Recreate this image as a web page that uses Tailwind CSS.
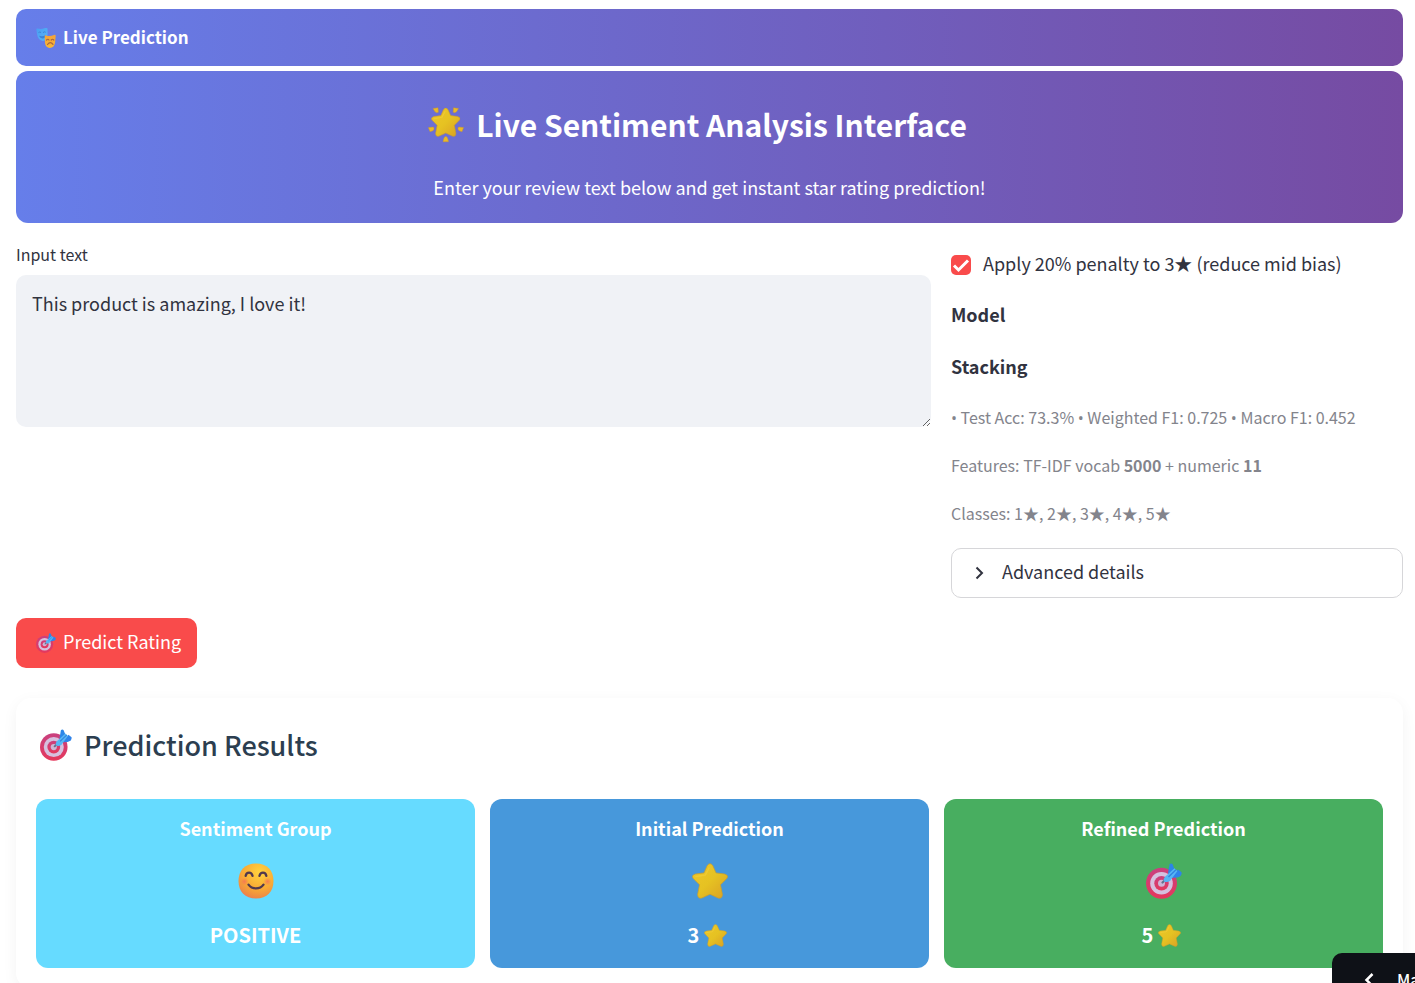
<!DOCTYPE html>
<html lang="en">
<head>
<meta charset="utf-8">
<meta name="viewport" content="width=device-width, initial-scale=1">
<title>Live Prediction</title>
<script src="https://cdn.jsdelivr.net/npm/@tailwindcss/browser@4"></script>
</head>
<body class="min-h-screen bg-white font-['Noto_Sans_CJK_SC','Noto_Sans',sans-serif] text-lg text-[#31333f]">

<!-- Icon sprites -->
<svg class="absolute size-0" aria-hidden="true">
  <defs>
    <linearGradient id="gold" x1="0" y1="0" x2="1" y2="1"><stop offset="0" stop-color="#edc62a"/><stop offset=".5" stop-color="#e6c222"/><stop offset="1" stop-color="#d99f25"/></linearGradient>
    <linearGradient id="ring" x1="0" y1="0" x2="0" y2="1"><stop offset="0" stop-color="#c9407f"/><stop offset="1" stop-color="#e5385c"/></linearGradient>
    <radialGradient id="skin" cx=".6" cy=".25" r=".85"><stop offset="0" stop-color="#ffd33f"/><stop offset=".55" stop-color="#f9ab35"/><stop offset=".85" stop-color="#ee8a44"/><stop offset="1" stop-color="#e2707a"/></radialGradient>
    <radialGradient id="blush"><stop offset="0" stop-color="#f5705a" stop-opacity=".8"/><stop offset="1" stop-color="#f5705a" stop-opacity="0"/></radialGradient>
    <linearGradient id="blue" x1="0" y1="0" x2="1" y2="1"><stop offset="0" stop-color="#4a9df2"/><stop offset="1" stop-color="#58b5f7"/></linearGradient>
    <linearGradient id="orange" x1="0" y1="0" x2="0" y2="1"><stop offset="0" stop-color="#f2a23c"/><stop offset="1" stop-color="#fbb932"/></linearGradient>
    <symbol id="star" viewBox="0 0 36 36">
      <path d="M15.300 2.400 Q18 -1 20.700 2.400 L24 9.900 L32.500 11 Q37 12.300 34.800 15.400 L28.500 21.800 L30.400 31.600 Q30 36.300 26 34.900 L18 31.200 L10 34.900 Q6 36.300 5.600 31.600 L7.500 21.800 L1.200 15.400 Q-1 12.300 3.500 11 L12 9.900 Z" fill="url(#gold)" stroke="#cd9d26" stroke-width=".7"/>
      <path d="M17 5 L13.500 11.900 L4 13.600" fill="none" stroke="#f7d544" stroke-width="1.500" stroke-linecap="round" stroke-linejoin="round" opacity=".4"/>
    </symbol>
    <symbol id="glow-star" viewBox="0 0 36 36">
      <svg x="3" y=".5" width="29.500" height="29.500" viewBox="0 0 36 36"><use href="#star"/></svg>
      <g fill="#e9b928" stroke="#c9962c" stroke-width=".4" stroke-linejoin="round">
        <path d="M5 1.500 L10 .7 L10.400 5.300 Q8.200 6.500 6.800 4.600 Z"/>
        <path d="M25.500 .7 L30.500 1.500 L28.700 4.600 Q27.300 6.500 25.100 5.300 Z"/>
        <path d="M.4 20.500 L5.500 20 Q7 22 5 23.700 L2 24.700 Z"/>
        <path d="M35.600 20.500 L30.500 20 Q29 22 31 23.700 L34 24.700 Z"/>
        <path d="M17.800 29.500 Q19.800 29.500 20.500 34.800 L15 34.800 Q15.800 29.500 17.800 29.500 Z"/>
      </g>
    </symbol>
    <symbol id="target" viewBox="0 0 36 36">
      <circle cx="15.500" cy="20.300" r="15.500" fill="url(#ring)"/>
      <circle cx="15.500" cy="20.300" r="11.300" fill="#d6c0df"/>
      <circle cx="15.500" cy="20.300" r="7.200" fill="url(#ring)"/>
      <circle cx="15.500" cy="20.300" r="3.500" fill="#cdb5d5"/>
      <path d="M16.500 19.500 L22 14" stroke="#63718d" stroke-width="2.200" stroke-linecap="round"/>
      <path d="M22 10 L23.500 1.500 Q25 -.5 26.600 1.300 L28.400 6 L24.500 14 Z" fill="#2c86e8"/>
      <path d="M25.500 13.700 L32 6.400 L35.500 9.200 Q36.300 13.200 31 14.600 L25 15 Z" fill="#2f83ea"/>
      <path d="M19 13.700 L28.500 5.200 L31.400 8 L24 18 Q19.800 20.200 17.700 17.900 Q17.200 15.800 19 13.700 Z" fill="#56b6f5"/>
      <path d="M22.500 14 L30.200 6.500" stroke="#3182df" stroke-width="1.200"/>
    </symbol>
    <symbol id="smile" viewBox="0 0 36 36">
      <path d="M18 .5 C29 .5 35.500 7.500 35.500 18 C35.500 28.500 29 35.500 18 35.500 C7 35.500 .5 28.500 .5 18 C.5 7.500 7 .5 18 .5 Z" fill="url(#skin)"/>
      <circle cx="6.500" cy="18.500" r="4" fill="url(#blush)"/><circle cx="29.500" cy="18.500" r="4" fill="url(#blush)"/>
      <path d="M7.700 12.800 C8.500 8.500 13.500 8.500 14.500 12.800 M21.500 12.800 C22.500 8.500 27.500 8.500 28.300 12.800 M10.500 21.700 C14 26.700 22 26.700 25.500 21.700" fill="none" stroke="#51394e" stroke-width="2.300" stroke-linecap="round"/>
    </symbol>
    <symbol id="masks" viewBox="0 0 20 20">
      <path d="M.3 1 Q.3 .1 1.500 .5 Q5 1.600 8.800 .1 Q11.500 -.6 11.500 1 L11.600 6 Q11.500 12.500 6.800 13 Q1.900 12 1 6 Z" fill="url(#blue)"/>
      <path d="M2.500 4.600 Q4 3.300 5 4.600 M7 4.600 Q8.500 3.200 9.700 4.300" fill="none" stroke="#3c80d4" stroke-width=".9"/>
      <path d="M3 7.800 Q6.400 8.700 9.600 7.300 Q9.300 10.500 6.500 10.500 Q4 10.400 3 7.800" fill="#3c80d4"/>
      <path d="M8.700 8.300 Q8.700 7 10 7.400 Q14 8.600 17.900 7 Q19.800 6.400 19.700 8 L19 15 Q18 19.800 13.800 20 Q9.500 19.300 9 15 Z" fill="url(#orange)"/>
      <path d="M10.500 12 Q12 10.500 13 12 M15.200 12 Q16.500 10.500 17.800 12 M11.500 16.500 Q14.300 12.700 17 16.300" fill="none" stroke="#ab6742" stroke-width="1.200" stroke-linecap="round"/>
    </symbol>
  </defs>
</svg>

<main class="pt-[9px] pr-3 pb-4 pl-4">
  <header class="flex h-[57px] items-center gap-[7px] rounded-[10px] bg-[linear-gradient(90deg,#667eea,#764ba2)] px-5 text-white">
    <svg class="size-5" aria-hidden="true"><use href="#masks"/></svg>
    <h2 class="text-[17px] font-semibold">Live Prediction</h2>
  </header>

  <section class="mt-[5px] flex h-[152px] flex-col items-center rounded-xl bg-[linear-gradient(90deg,#667eea,#764ba2)] pt-[30px] text-white">
    <h1 class="flex items-center gap-3 pr-6 text-[30px] leading-[46px] font-semibold"><svg class="mt-0.5 size-9" aria-hidden="true"><use href="#glow-star"/></svg>Live Sentiment Analysis Interface</h1>
    <p class="mt-[26px] leading-7">Enter your review text below and get instant star rating prediction!</p>
  </section>

  <form class="mt-5">
    <div class="grid grid-cols-[915fr_452fr] gap-5">
      <div>
        <label for="review" class="block h-8 text-base leading-[22px]">Input text</label>
        <textarea id="review" class="block h-[152px] w-full resize-y rounded-[10px] bg-[#f0f2f6] px-4 pt-3.5 leading-7 outline-none">This product is amazing, I love it!</textarea>
      </div>
      <div>
        <label class="mt-2 flex h-7 items-center gap-3">
          <span class="relative size-5">
            <input type="checkbox" checked class="block size-5 appearance-none rounded-[5px] bg-[#f94b4b]">
            <svg class="pointer-events-none absolute inset-0 size-5" viewBox="0 0 20 20" fill="none" stroke="#fff" stroke-width="3" aria-hidden="true"><path d="M3 10.500 L7.500 15 L17 5.500"/></svg>
          </span>
          <span class="pb-1">Apply 20% penalty to 3★ (reduce mid bias)</span>
        </label>
        <p class="mt-[21px] leading-7 font-semibold">Model</p>
        <p class="mt-6 leading-7 font-semibold">Stacking</p>
        <div class="mt-[25px] flex flex-col gap-6 text-base leading-6 text-[#83848c]">
          <p><span class="font-['Open_Sans'] leading-none">•</span> Test Acc: 73.3% <span class="font-['Open_Sans'] leading-none">•</span> Weighted F1: 0.725 <span class="font-['Open_Sans'] leading-none">•</span> Macro F1: 0.452</p>
          <p>Features: TF-IDF vocab <strong class="font-semibold">5000</strong> + numeric <strong class="font-semibold">11</strong></p>
          <p>Classes: 1★, 2★, 3★, 4★, 5★</p>
        </div>
        <details class="mt-[23px] rounded-[10px] border border-[#d6d6d9]">
          <summary class="flex h-12 cursor-pointer list-none items-center gap-3 px-4">
            <svg class="size-[22px]" viewBox="0 0 22 22" fill="none" stroke="currentColor" stroke-width="2" aria-hidden="true"><path d="M8.500 5.500 L14 11 L8.500 16.500"/></svg>
            <span class="pb-1">Advanced details</span>
          </summary>
        </details>
      </div>
    </div>
    <button type="button" class="mt-5 flex h-[50px] items-center gap-[7px] rounded-[10px] bg-[#f94b4b] pr-4 pl-5 text-white"><svg class="size-5" aria-hidden="true"><use href="#target"/></svg><span class="pb-1">Predict Rating</span></button>
  </form>

  <section class="mt-[30px] rounded-[15px] bg-white px-5 pb-5 shadow-[0_4px_15px_rgba(0,0,0,0.05)]">
    <h2 class="mb-2 flex h-[93px] items-center gap-3 pl-1 text-[27px] font-medium text-[#2c3e50]"><svg class="size-8" aria-hidden="true"><use href="#target"/></svg>Prediction Results</h2>
    <div class="grid grid-cols-3 gap-[15px] text-center text-white">
      <article class="flex h-[169px] flex-col items-center rounded-xl bg-[#66dbff] pt-[15px]">
        <h3 class="leading-7 font-bold">Sentiment Group</h3>
        <svg class="mt-[21px] size-9" role="img" aria-label="Smile"><use href="#smile"/></svg>
        <p class="mt-[22px] text-xl leading-7 font-bold">POSITIVE</p>
      </article>
      <article class="flex h-[169px] flex-col items-center rounded-xl bg-[#4798db] pt-[15px]">
        <h3 class="leading-7 font-bold">Initial Prediction</h3>
        <svg class="mt-[21px] size-9" role="img" aria-label="Star"><use href="#star"/></svg>
        <p class="mt-[22px] flex items-center gap-[5px] pr-1 text-xl leading-7 font-bold">3<svg class="size-[23px]" role="img" aria-label="stars"><use href="#star"/></svg></p>
      </article>
      <article class="flex h-[169px] flex-col items-center rounded-xl bg-[#48ae60] pt-[15px]">
        <h3 class="leading-7 font-bold">Refined Prediction</h3>
        <svg class="mt-[21px] size-9" role="img" aria-label="Target"><use href="#target"/></svg>
        <p class="mt-[22px] flex items-center gap-[5px] pr-1 text-xl leading-7 font-bold">5<svg class="size-[23px]" role="img" aria-label="stars"><use href="#star"/></svg></p>
      </article>
    </div>
  </section>
</main>


<button type="button" class="fixed right-0 bottom-0 flex h-[30px] w-[83px] items-start gap-[17px] overflow-hidden rounded-tl-[10px] bg-[#0e1117] pt-3.5 pl-7 text-base leading-6 font-medium whitespace-nowrap text-white">
  <svg class="mt-[3px] size-5 shrink-0" viewBox="0 0 20 20" fill="none" stroke="currentColor" stroke-width="2.500" aria-hidden="true"><path d="M12.500 4 L6.500 10 L12.500 16"/></svg>Manage app
</button>
</body>
</html>
